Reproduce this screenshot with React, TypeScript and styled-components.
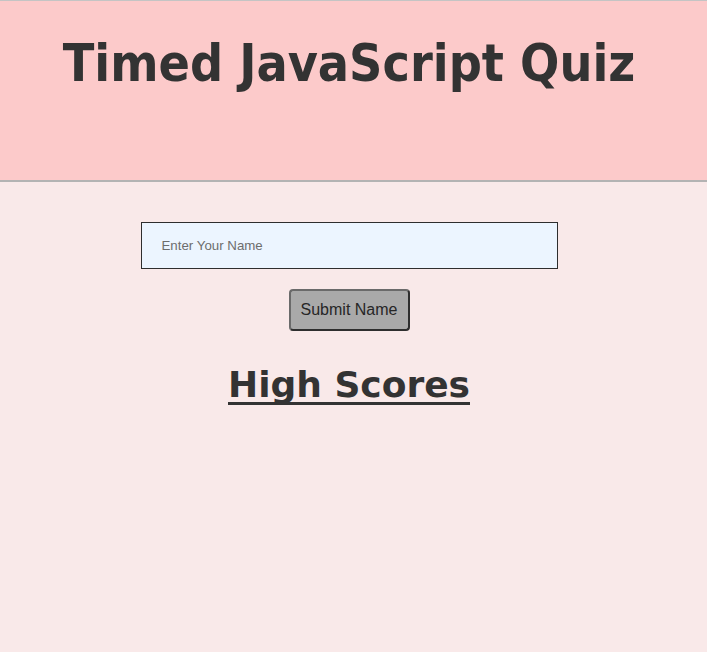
import React from "react";
import styled, { createGlobalStyle } from "styled-components";

const Global = createGlobalStyle`
  html, body { margin: 0; padding: 0; }
  body {
    background: #f9e9e9;
    font-family: "DejaVu Sans", sans-serif;
    color: #333;
  }
`;

const Page = styled.div`
  min-height: 652px;
  background: #f9e9e9;
`;

const Header = styled.header`
  height: 179px;
  background: #fccaca;
  border-top: 1px solid #c4c4c4;
  border-bottom: 2px solid #b3b3b3;
  display: flex;
  justify-content: center;
  padding-right: 9px;
`;

const Title = styled.h1`
  margin: 32px 0 0;
  font-family: "DejaVu Sans Condensed", "DejaVu Sans", sans-serif;
  font-stretch: condensed;
  font-weight: bold;
  font-size: 51.5px;
  line-height: 60px;
  color: #333;
`;

const Main = styled.main`
  display: flex;
  flex-direction: column;
  align-items: center;
  padding-top: 40px;
  padding-right: 9px;
`;

const NameInput = styled.input`
  box-sizing: border-box;
  width: 417px;
  height: 47px;
  padding: 0 20px;
  border: 1px solid #2e2e2e;
  background: #ecf5ff;
  font-family: "Liberation Sans", Arial, sans-serif;
  font-size: 13.3px;
  color: #333;
  outline: none;
  &::placeholder { color: #6d6d6d; }
`;

const SubmitButton = styled.button`
  box-sizing: border-box;
  margin-top: 20px;
  width: 121px;
  height: 42px;
  background: #a9a9a9;
  border: 2px solid #3a3a3a;
  border-color: #6a6a6a #2e2e2e #2e2e2e #6a6a6a;
  border-radius: 4px;
  font-family: "Liberation Sans", Arial, sans-serif;
  font-size: 16px;
  color: #262626;
  padding: 0;
`;

const ScoresHeading = styled.h2`
  margin: 32px 0 0;
  font-family: "DejaVu Sans", sans-serif;
  font-weight: bold;
  font-size: 36px;
  line-height: 44px;
  text-decoration: underline;
  text-decoration-thickness: 3px;
  text-underline-offset: 5px;
  text-decoration-skip-ink: none;
  color: #333;
`;

export default function App() {
  return (
    <Page>
      <Global />
      <Header>
        <Title>Timed JavaScript Quiz</Title>
      </Header>
      <Main>
        <NameInput placeholder="Enter Your Name" />
        <SubmitButton>Submit Name</SubmitButton>
        <ScoresHeading>High Scores</ScoresHeading>
      </Main>
    </Page>
  );
}
